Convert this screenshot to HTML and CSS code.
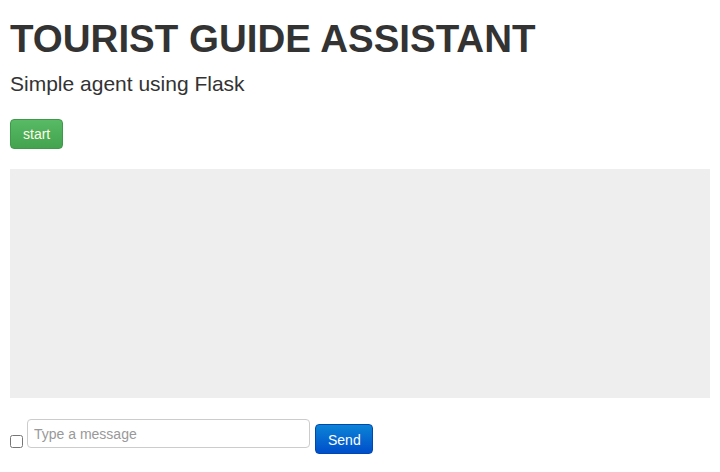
FILE: index.html
```html
<!DOCTYPE html>
<html>
<head>
<meta charset="utf-8">
<link rel="stylesheet" href="styles.css">
</head>
<body>
<div class="page">
  <h1 class="title">TOURIST GUIDE ASSISTANT</h1>
  <p class="subtitle">Simple agent using Flask</p>
  <div class="actions"><button class="btn btn-start">start</button></div>
  <div class="chatbox"></div>
  <div class="composer">
    <input type="checkbox" class="check">
    <input type="text" class="message" placeholder="Type a message">
    <button class="btn btn-send">Send</button>
  </div>
</div>
</body>
</html>
```
FILE: styles.css
```css
html, body { margin: 0; padding: 0; background: #fff; }
body { font-family: "Liberation Sans", Arial, sans-serif; color: #333; font-size: 14px; }
.page { padding: 0 10px; }
.title { font-size: 38.5px; line-height: 42px; font-weight: bold; margin: 18px 0 0; color: #333; }
.subtitle { font-size: 21px; line-height: 23px; margin: 12px 0 0; color: #333; }
.actions { margin-top: 24px; display: flex; }
.btn {
  font-family: "Liberation Sans", Arial, sans-serif;
  font-size: 14px; line-height: 16px;
  padding: 6px 12px; border-radius: 4px; color: #fff; cursor: pointer;
}
.btn-start {
  background: linear-gradient(#58ba64, #43a34f);
  border: 1px solid #3d9a48;
  color: #fffbe8;
}
.chatbox { margin-top: 20px; height: 229px; background: #eee; }
.composer { margin-top: 21px; display: flex; align-items: flex-start; }
.check { width: 13px; height: 13px; margin: 16px 4px 0 0; }
.message {
  width: 283px; height: 29px; box-sizing: border-box;
  border: 1px solid #ccc; border-radius: 4px;
  padding: 0 6px; font-family: "Liberation Sans", Arial, sans-serif; font-size: 14px; color: #555;
}
.message::placeholder { color: #999; }
.btn-send {
  margin: 5px 0 0 5px; padding: 7px 12px 5px; width: 58px;
  background: linear-gradient(#0b84d6, #004ecb);
  border: 1px solid #0048b0;
}
```
